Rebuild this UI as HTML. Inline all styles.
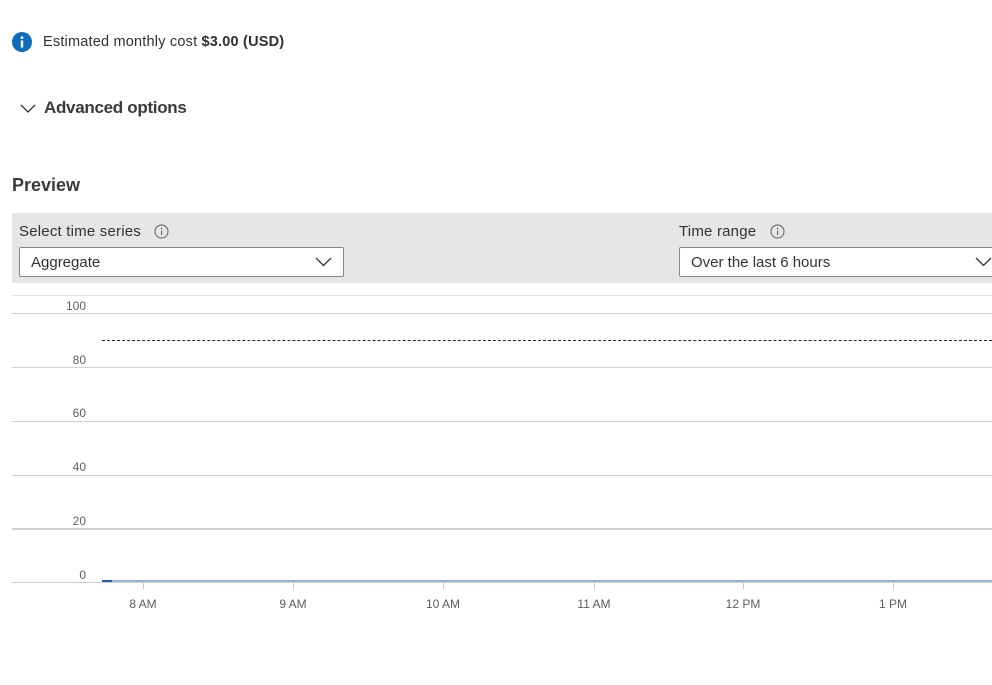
<!DOCTYPE html>
<html><head><style>
*{margin:0;padding:0;box-sizing:border-box}
body{width:992px;height:685px;overflow:hidden;background:#fff;font-family:"Liberation Sans",sans-serif;color:#323130;position:relative}
.a{position:absolute}
.hl{position:absolute;left:12px;right:0;height:1px;background:#d0d0d0}
.yl{position:absolute;width:86px;left:0;text-align:right;font-size:12px;color:#605e5c}
.xl{position:absolute;font-size:12px;color:#605e5c;width:60px;text-align:center}
.tk{position:absolute;top:583px;width:1px;height:6px;background:#c8c8c8}
.dd{position:absolute;height:30px;border:1px solid #8a8886;background:#fff;border-radius:2px;font-size:15px;padding:6px 11px}
</style></head><body>
<svg class="a" style="left:12px;top:32px" width="20" height="20" viewBox="0 0 20 20"><circle cx="10" cy="10" r="10" fill="#0f6cbd"/><rect x="8.8" y="8.5" width="2.4" height="7" fill="#fff"/><circle cx="10" cy="5.6" r="1.4" fill="#fff"/></svg>
<div class="a" style="left:43px;top:34px;font-size:14.5px;letter-spacing:.2px">Estimated monthly cost <b>$3.00 (USD)</b></div>
<svg class="a" style="left:20px;top:104px" width="16" height="10" viewBox="0 0 16 10"><path d="M1 1l7 7 7-7" fill="none" stroke="#323130" stroke-width="1.3"/></svg>
<div class="a" style="left:44px;top:98px;font-size:17px;font-weight:bold;letter-spacing:-.3px;color:#3b3a39">Advanced options</div>
<div class="a" style="left:12px;top:175px;font-size:18px;font-weight:bold;color:#3b3a39">Preview</div>
<div class="a" style="left:12px;top:213px;width:980px;height:70px;background:#e6e6e6"></div>
<div class="a" style="left:19px;top:223px;font-size:15px;letter-spacing:.2px">Select time series</div>
<svg class="a" style="left:154px;top:224px" width="15" height="15" viewBox="0 0 15 15"><circle cx="7.5" cy="7.5" r="6.5" fill="none" stroke="#605e5c"/><path d="M7.5 6.5v4.5" stroke="#605e5c"/><circle cx="7.5" cy="4.5" r=".7" fill="#605e5c"/></svg>
<div class="dd" style="left:19px;top:247px;width:325px">Aggregate</div>
<svg class="a" style="left:315px;top:257px" width="17" height="10" viewBox="0 0 17 10"><path d="M1 1l7.5 7.5L16 1" fill="none" stroke="#323130" stroke-width="1.3"/></svg>
<div class="a" style="left:679px;top:223px;font-size:15px;letter-spacing:.2px">Time range</div>
<svg class="a" style="left:770px;top:224px" width="15" height="15" viewBox="0 0 15 15"><circle cx="7.5" cy="7.5" r="6.5" fill="none" stroke="#605e5c"/><path d="M7.5 6.5v4.5" stroke="#605e5c"/><circle cx="7.5" cy="4.5" r=".7" fill="#605e5c"/></svg>
<div class="dd" style="left:679px;top:247px;width:330px">Over the last 6 hours</div>
<svg class="a" style="left:975px;top:257px" width="17" height="10" viewBox="0 0 17 10"><path d="M1 1l7.5 7.5L16 1" fill="none" stroke="#323130" stroke-width="1.3"/></svg>
<div class="hl" style="top:295px;background:#e4e4e4"></div>
<div class="hl" style="top:313px"></div>
<div class="hl" style="top:367px"></div>
<div class="hl" style="top:421px"></div>
<div class="hl" style="top:475px"></div>
<div class="hl" style="top:528px;height:2px"></div>
<div class="hl" style="top:582px"></div>
<div class="yl" style="top:299px">100</div>
<div class="yl" style="top:353px">80</div>
<div class="yl" style="top:406px">60</div>
<div class="yl" style="top:460px">40</div>
<div class="yl" style="top:514px">20</div>
<div class="yl" style="top:568px">0</div>
<div class="a" style="left:102px;top:340px;right:0;border-top:1px dashed #222"></div>
<div class="a" style="left:102px;top:580px;right:0;height:2px;background:#8fb5dc"></div>
<div class="a" style="left:102px;top:580px;width:10px;height:2px;background:#1f5fa8"></div>
<div class="tk" style="left:143px"></div><div class="tk" style="left:293px"></div><div class="tk" style="left:443px"></div><div class="tk" style="left:594px"></div><div class="tk" style="left:743px"></div><div class="tk" style="left:893px"></div>
<div class="xl" style="left:113px;top:597px">8 AM</div>
<div class="xl" style="left:263px;top:597px">9 AM</div>
<div class="xl" style="left:413px;top:597px">10 AM</div>
<div class="xl" style="left:564px;top:597px">11 AM</div>
<div class="xl" style="left:713px;top:597px">12 PM</div>
<div class="xl" style="left:863px;top:597px">1 PM</div>
</body></html>
